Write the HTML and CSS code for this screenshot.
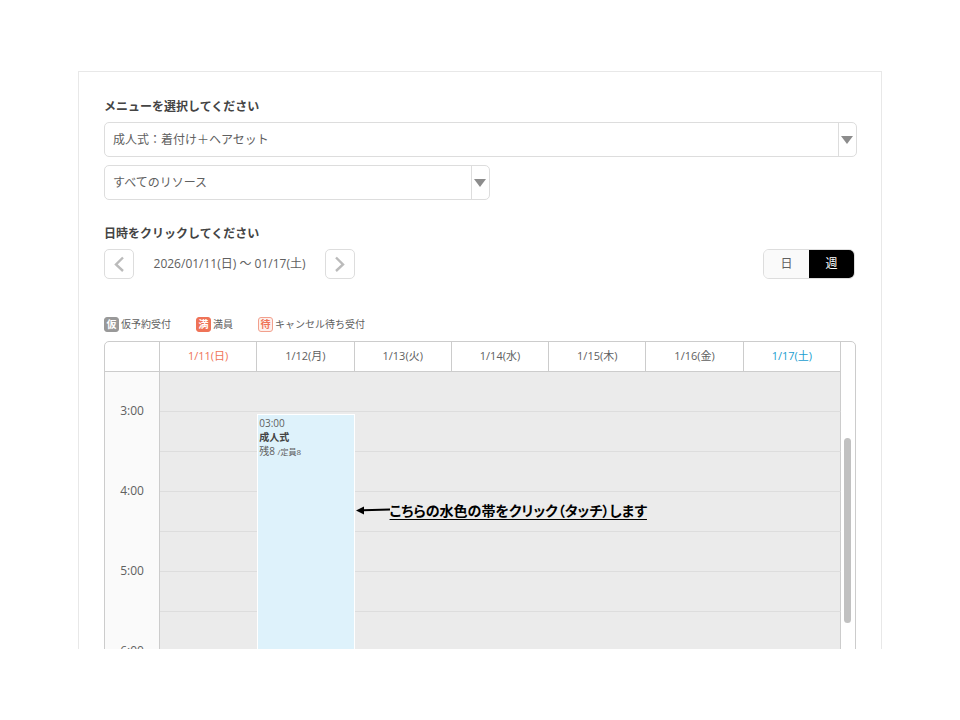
FILE: index.html
```html
<!DOCTYPE html>
<html lang="ja">
<head>
  <meta charset="utf-8">
  <title>予約カレンダー</title>
  <link rel="stylesheet" href="styles.css">
</head>
<body>
  <main class="panel">
    <h2><label for="menu">メニューを選択してください</label></h2>
    <div class="select-box">
      <select id="menu">
        <option>成人式：着付け＋ヘアセット</option>
      </select>
    </div>
    <div class="select-box resource">
      <select id="resource" aria-label="リソース">
        <option>すべてのリソース</option>
      </select>
    </div>

    <h2 class="date-title">日時をクリックしてください</h2>
    <div class="toolbar">
      <button type="button" class="arrow-button" id="prev-button" aria-label="前の週">
        <svg width="12" height="16" viewBox="0 0 12 16"><path d="M10 1.5 3 8.5l7 6.5"/></svg>
      </button>
      <span class="range">2026/01/11(日) ～ 01/17(土)</span>
      <button type="button" class="arrow-button" id="next-button" aria-label="次の週">
        <svg width="12" height="16" viewBox="0 0 12 16"><path d="M2 1.5 9 8.5l-7 6.5"/></svg>
      </button>
      <div class="view-switch">
        <button type="button">日</button>
        <button type="button" class="active">週</button>
      </div>
    </div>

    <ul class="legend">
      <li><span class="mark temp">仮</span>仮予約受付</li>
      <li><span class="mark full">満</span>満員</li>
      <li><span class="mark wait">待</span>キャンセル待ち受付</li>
    </ul>

    <div class="calendar">
      <table>
        <thead>
          <tr>
            <th class="time"></th>
            <th class="sun">1/11(日)</th>
            <th>1/12(月)</th>
            <th>1/13(火)</th>
            <th>1/14(水)</th>
            <th>1/15(木)</th>
            <th>1/16(金)</th>
            <th class="sat">1/17(土)</th>
          </tr>
        </thead>
        <tbody>
          <tr><th class="time" rowspan="2">3:00</th><td></td><td></td><td></td><td></td><td></td><td></td><td></td></tr>
          <tr>
            <td></td>
            <td class="slot">
              <a href="#" class="event">
                <span>03:00</span>
                <strong>成人式</strong>
                <span>残8 <small>/定員8</small></span>
              </a>
            </td>
            <td></td><td></td><td></td><td></td><td></td>
          </tr>
          <tr><th class="time" rowspan="2">4:00</th><td></td><td></td><td></td><td></td><td></td><td></td><td></td></tr>
          <tr>
            <td></td><td></td>
            <td class="slot">
              <p class="note">
                <svg width="34" height="10" viewBox="0 0 34 10"><path d="M7 5.3 34 4.5" stroke="#000" stroke-width="2"/><path d="M0 5.5 8 1.5v8z"/></svg>
                <span>こちらの水色の帯をクリック（タッチ）します</span>
              </p>
            </td>
            <td></td><td></td><td></td><td></td>
          </tr>
          <tr><th class="time" rowspan="2">5:00</th><td></td><td></td><td></td><td></td><td></td><td></td><td></td></tr>
          <tr><td></td><td></td><td></td><td></td><td></td><td></td><td></td></tr>
          <tr><th class="time" rowspan="2">6:00</th><td></td><td></td><td></td><td></td><td></td><td></td><td></td></tr>
          <tr><td></td><td></td><td></td><td></td><td></td><td></td><td></td></tr>
        </tbody>
      </table>
      <div class="scrollbar"><div class="thumb"></div></div>
    </div>
  </main>
</body>
</html>
```

FILE: styles.css
```css
* {
  box-sizing: border-box;
}

body {
  margin: 0;
  height: 100vh;
  padding: 71px 78px;
  overflow: hidden;
  background: #fff;
  color: #606060;
  font-family: "Open Sans", "Noto Sans CJK JP", sans-serif;
  font-size: 12px;
  line-height: 16px;
}

button,
select {
  font: inherit;
  color: inherit;
}

.panel {
  height: 100%;
  padding: 26px 24px 0 25px;
  overflow: hidden;
  border: 1px solid #e8e8e8;
  border-bottom: none;
}

h2 {
  margin: 0 0 6px;
  font-size: 12px;
  line-height: 18px;
  color: #444;
}

.select-box {
  position: relative;
  margin-bottom: 8px;
}

.select-box select {
  display: block;
  width: 100%;
  height: 35px;
  padding: 0 26px 0 8px;
  border: 1px solid #ddd;
  border-radius: 5px;
  background: #fff;
  appearance: none;
}

/* arrow part on the right side of the select */
.select-box::before {
  content: "";
  position: absolute;
  top: 1px;
  right: 18px;
  bottom: 1px;
  border-left: 1px solid #ddd;
}

.select-box::after {
  content: "";
  position: absolute;
  top: 14px;
  right: 4px;
  border: 6px solid transparent;
  border-top: 8px solid #8c8c8c;
  border-bottom: none;
}

.resource {
  width: 51%;
  min-width: 386px;
}

.date-title {
  margin-top: 25px;
}

.toolbar {
  display: flex;
  align-items: center;
  margin-bottom: 37px;
}

.arrow-button {
  display: flex;
  align-items: center;
  justify-content: center;
  width: 30px;
  height: 30px;
  padding: 0;
  border: 1px solid #ddd;
  border-radius: 5px;
  background: #fff;
  cursor: pointer;
}

.arrow-button path {
  fill: none;
  stroke: #bbb;
  stroke-width: 2.4;
}

.range {
  min-width: 191px;
  text-align: center;
}

.view-switch {
  display: flex;
  margin-left: auto;
  margin-right: 2px;
  overflow: hidden;
  border: 1px solid #ddd;
  border-radius: 6px;
}

.view-switch button {
  width: 45px;
  height: 28px;
  padding: 0;
  border: none;
  background: #fafafa;
  cursor: pointer;
}

.view-switch .active {
  background: #000;
  color: #fff;
}

.legend {
  display: flex;
  gap: 25px;
  margin: 0 0 9px;
  padding: 0;
  list-style: none;
  font-size: 10px;
}

.legend li {
  display: flex;
  align-items: center;
  gap: 2px;
}

.mark {
  width: 15px;
  height: 15px;
  border: 1px solid;
  border-radius: 3px;
  font-weight: bold;
  line-height: 13px;
  text-align: center;
}

.temp {
  border-color: #999;
  background: #999;
  color: #fff;
}

.full {
  border-color: #ef7357;
  background: #ef7357;
  color: #fff;
}

.wait {
  border-color: #f2a08d;
  background: #fdf0ec;
  color: #ef7357;
}

.calendar {
  display: flex;
  margin-right: 1px;
  overflow: hidden;
  border: 1px solid #ccc;
  border-radius: 5px 5px 0 0;
}

table {
  flex: 1;
  width: 100%;
  table-layout: fixed;
  border-collapse: separate;
  border-spacing: 0;
}

th {
  font-weight: normal;
}

thead th {
  height: 30px;
  padding: 0 0 2px;
  border-right: 1px solid #ccc;
  border-bottom: 1px solid #ccc;
  font-size: 11px;
}

.time {
  width: 55px;
}

tbody .time {
  padding: 0 0 2px;
  border-right: 1px solid #ccc;
  background: #fafafa;
}

td {
  height: 40px;
  padding: 0;
  border-bottom: 1px solid #ddd;
  background: #ebebeb;
}

td:last-child {
  border-right: 1px solid #ccc;
}

.sun {
  color: #ef7357;
}

.sat {
  color: #1a9ed0;
}

.slot {
  position: relative;
}

.event {
  position: absolute;
  top: 2px;
  left: 0;
  right: 0;
  z-index: 1;
  display: flex;
  flex-direction: column;
  height: 300px;
  padding: 1px;
  border: 1px solid #fff;
  background: #def2fb;
  color: #606060;
  font-size: 10px;
  line-height: 14px;
  text-decoration: none;
}

.event strong {
  color: #444;
}

.event small {
  font-size: 8px;
}

.note {
  position: absolute;
  top: 8px;
  left: 1px;
  z-index: 2;
  display: flex;
  align-items: center;
  margin: 0;
  color: #000;
  font-family: "Noto Sans CJK JP", sans-serif;
  font-size: 14px;
  font-weight: bold;
  font-feature-settings: "palt";
  line-height: 20px;
  white-space: nowrap;
}

.note span {
  text-decoration: underline;
  text-decoration-thickness: 1px;
  text-decoration-skip-ink: none;
  text-underline-offset: 3px;
}

.scrollbar {
  width: 14px;
  padding: 96px 4px 0 3px;
}

.thumb {
  height: 185px;
  border-radius: 4px;
  background: #c1c1c1;
}
```
